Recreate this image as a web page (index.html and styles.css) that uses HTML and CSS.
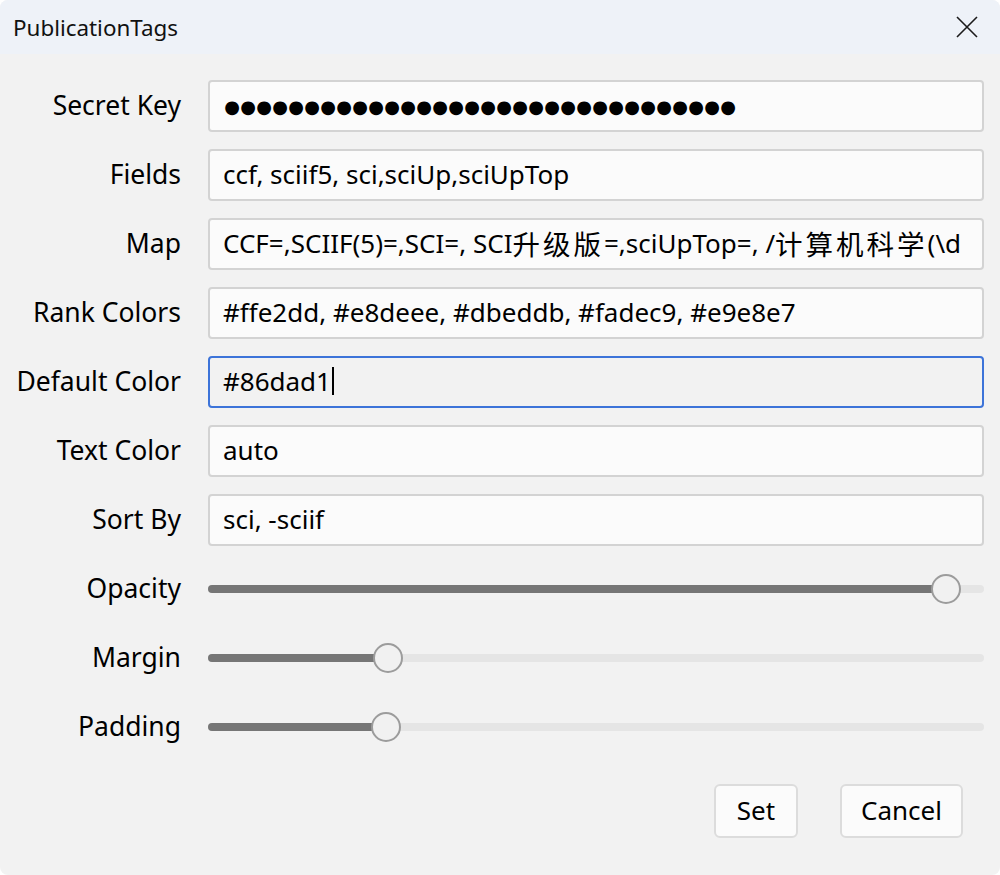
FILE: index.html
```html
<!DOCTYPE html>
<html lang="en">
<head>
<meta charset="utf-8">
<title>PublicationTags</title>
<link rel="stylesheet" href="styles.css">
</head>
<body>
<div class="dialog">
  <header class="titlebar">
    <span class="title">PublicationTags</span>
    <button class="close" aria-label="Close">
      <svg width="22" height="22" viewBox="0 0 22 22"><path d="M1 1 L21 21 M21 1 L1 21" stroke="#1b1b1b" stroke-width="1.6" fill="none"/></svg>
    </button>
  </header>
  <main class="form">
    <label class="label">Secret Key</label>
    <div class="field dots"><span>●</span><span>●</span><span>●</span><span>●</span><span>●</span><span>●</span><span>●</span><span>●</span><span>●</span><span>●</span><span>●</span><span>●</span><span>●</span><span>●</span><span>●</span><span>●</span><span>●</span><span>●</span><span>●</span><span>●</span><span>●</span><span>●</span><span>●</span><span>●</span><span>●</span><span>●</span><span>●</span><span>●</span><span>●</span><span>●</span><span>●</span><span>●</span></div>

    <label class="label">Fields</label>
    <div class="field">ccf, sciif5, sci,sciUp,sciUpTop</div>

    <label class="label">Map</label>
    <div class="field">CCF=,SCIIF(5)=,SCI=, SCI<span class="cjk">升级版</span>=,sciUpTop=, /<span class="cjk">计算机科学</span>(\d</div>

    <label class="label">Rank Colors</label>
    <div class="field">#ffe2dd, #e8deee, #dbeddb, #fadec9, #e9e8e7</div>

    <label class="label">Default Color</label>
    <div class="field focused">#86dad1<span class="caret"></span></div>

    <label class="label">Text Color</label>
    <div class="field">auto</div>

    <label class="label">Sort By</label>
    <div class="field">sci, -sciif</div>

    <label class="label">Opacity</label>
    <div class="slider"><div class="track"><div class="fill" style="width:95.1%"></div><div class="thumb" style="left:95.1%"></div></div></div>

    <label class="label">Margin</label>
    <div class="slider"><div class="track"><div class="fill" style="width:23.2%"></div><div class="thumb" style="left:23.2%"></div></div></div>

    <label class="label">Padding</label>
    <div class="slider"><div class="track"><div class="fill" style="width:22.9%"></div><div class="thumb" style="left:22.9%"></div></div></div>
  </main>
  <footer class="actions">
    <button class="btn btn-set">Set</button>
    <button class="btn btn-cancel">Cancel</button>
  </footer>
</div>
</body>
</html>
```
FILE: styles.css
```css
* { box-sizing: border-box; }
html, body { margin: 0; padding: 0; background: #ffffff; }
body {
  font-family: "Noto Sans", "Noto Sans CJK SC", sans-serif;
  color: #000;
}
.dialog {
  width: 1000px;
  height: 875px;
  background: #f2f2f2;
  border-radius: 8px;
  overflow: hidden;
  display: flex;
  flex-direction: column;
}
.titlebar {
  height: 54px;
  background: #eef2f8;
  display: flex;
  align-items: center;
  justify-content: space-between;
  padding: 0 22px 0 13px;
}
.title {
  font-size: 22.4px;
  color: #111;
}
.close {
  border: 0;
  background: transparent;
  padding: 0;
  width: 22px;
  height: 22px;
  display: flex;
}
.form {
  display: grid;
  grid-template-columns: 181px 1fr;
  grid-auto-rows: 52px;
  column-gap: 27px;
  row-gap: 17px;
  padding: 26px 16px 0 0;
}
.label {
  align-self: center;
  text-align: right;
  font-size: 26.5px;
  white-space: nowrap;
  line-height: 1;
  padding-bottom: 2px;
}
.field {
  border: 2px solid #d3d3d3;
  border-radius: 4px;
  background: #fbfbfb;
  font-family: "Noto Sans", "Noto Sans CJK SC", sans-serif;
  font-size: 26px;
  white-space: nowrap;
  overflow: hidden;
  display: flex;
  align-items: center;
  padding: 0 14px 2px 13px;
}
.cjk {
  font-size: 27.5px;
  letter-spacing: 3px;
}
.field.focused {
  border-color: #3d74d9;
  background: #f2f2f2;
}
.caret {
  display: inline-block;
  width: 2px;
  height: 28px;
  background: #000;
  margin-left: 1px;
}
.dots { padding-left: 14px; padding-top: 4px; }
.dots span {
  display: inline-block;
  width: 16px;
  text-align: center;
  font-family: "DejaVu Sans", sans-serif;
  font-size: 18px;
  line-height: 1;
}
.slider {
  display: flex;
  align-items: center;
}
.track {
  position: relative;
  width: 100%;
  height: 8px;
  border-radius: 4px;
  background: #e5e5e5;
}
.fill {
  height: 100%;
  border-radius: 4px;
  background: #767676;
}
.thumb {
  position: absolute;
  top: 50%;
  width: 30px;
  height: 30px;
  margin: -15px 0 0 -15px;
  border-radius: 50%;
  background: #f1f1f1;
  border: 2px solid #9c9c9c;
}
.actions {
  display: flex;
  justify-content: flex-end;
  gap: 42px;
  padding: 31px 37px 0 0;
}
.btn {
  height: 54px;
  border: 2px solid #dcdcdc;
  border-radius: 6px;
  background: #fbfbfb;
  font-family: "Noto Sans", sans-serif;
  font-size: 26px;
  color: #000;
  padding: 0 0 3px 0;
}
.btn-set { width: 84px; }
.btn-cancel { width: 123px; }
```
